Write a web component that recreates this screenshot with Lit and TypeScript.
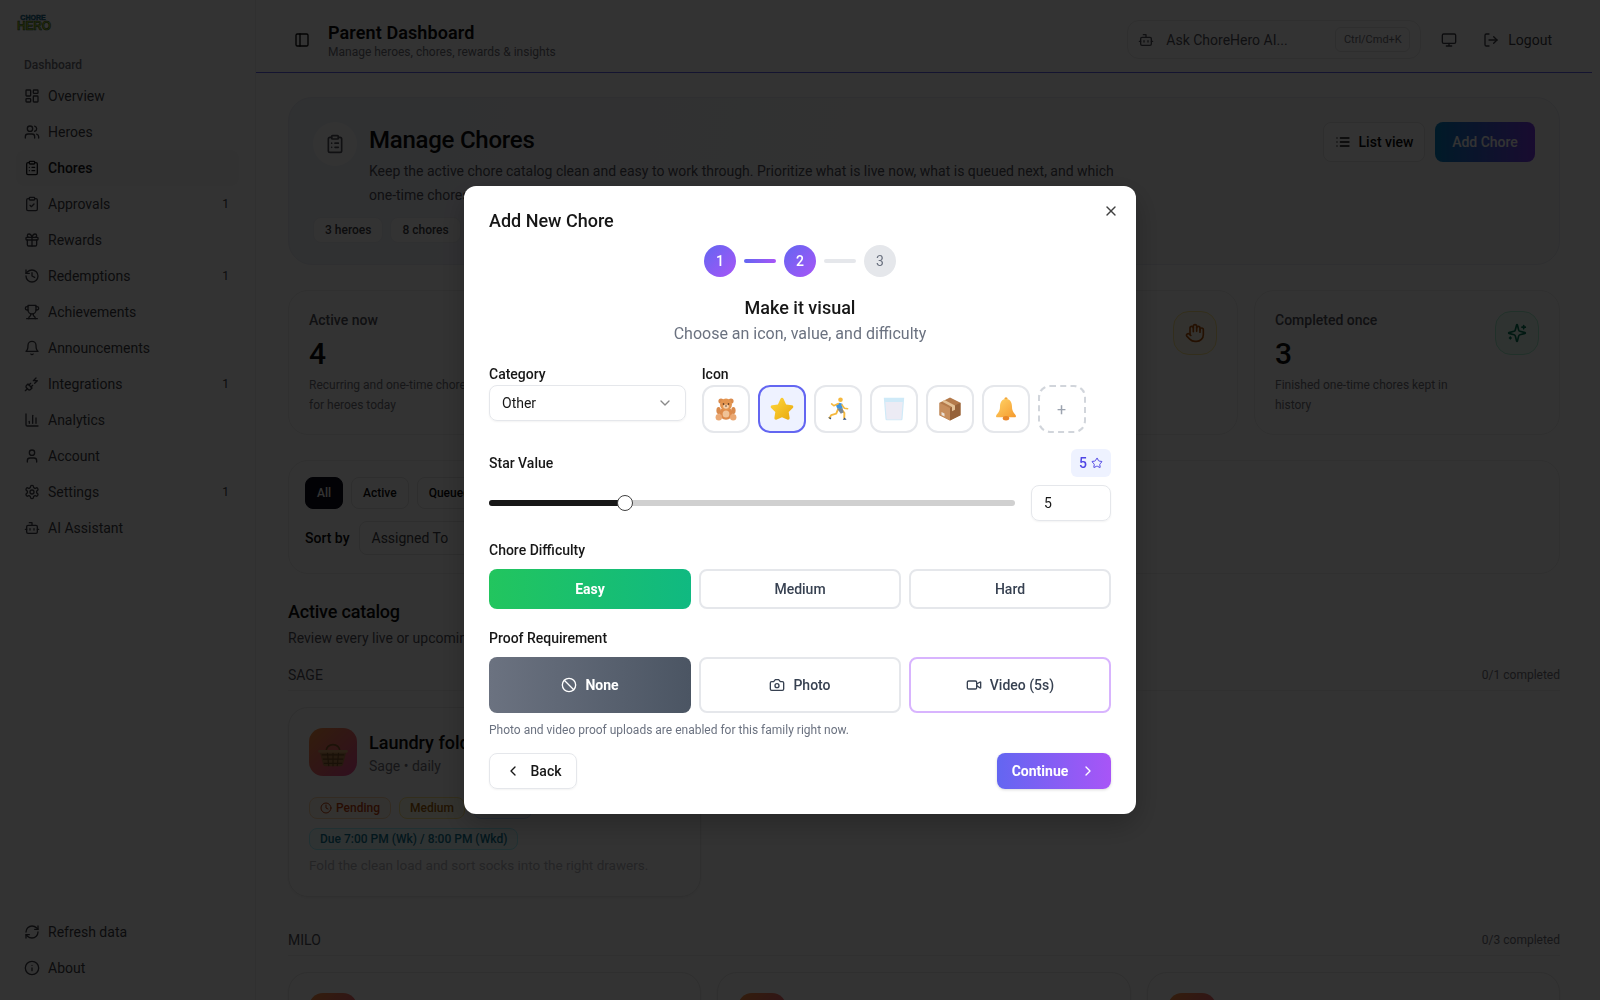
import { LitElement, html, css, svg } from "lit";
import { customElement } from "lit/decorators.js";
import { unsafeSVG } from "lit/directives/unsafe-svg.js";

const clip = `<rect x="8" y="2" width="8" height="4" rx="1"/><path d="M16 4h2a2 2 0 0 1 2 2v14a2 2 0 0 1-2 2H6a2 2 0 0 1-2-2V6a2 2 0 0 1 2-2h2"/>`;
const I: Record<string, string> = {
  dash: `<rect x="3" y="3" width="7" height="9" rx="1"/><rect x="14" y="3" width="7" height="5" rx="1"/><rect x="14" y="12" width="7" height="9" rx="1"/><rect x="3" y="16" width="7" height="5" rx="1"/>`,
  users: `<path d="M16 21v-2a4 4 0 0 0-4-4H6a4 4 0 0 0-4 4v2"/><circle cx="9" cy="7" r="4"/><path d="M22 21v-2a4 4 0 0 0-3-3.87"/><path d="M16 3.13a4 4 0 0 1 0 7.75"/>`,
  clipList: clip + `<path d="M12 11h4M12 16h4M8 11h.01M8 16h.01"/>`,
  clipCheck: clip + `<path d="m9 14 2 2 4-4"/>`,
  gift: `<rect x="3" y="8" width="18" height="4" rx="1"/><path d="M12 8v13"/><path d="M19 12v7a2 2 0 0 1-2 2H7a2 2 0 0 1-2-2v-7"/><path d="M7.5 8a2.5 2.5 0 0 1 0-5A4.8 8 0 0 1 12 8a4.8 8 0 0 1 4.5-5 2.5 2.5 0 0 1 0 5"/>`,
  history: `<path d="M3 12a9 9 0 1 0 9-9 9.75 9.75 0 0 0-6.74 2.74L3 8"/><path d="M3 3v5h5"/><path d="M12 7v5l4 2"/>`,
  trophy: `<path d="M6 9H4.5a2.5 2.5 0 0 1 0-5H6"/><path d="M18 9h1.5a2.5 2.5 0 0 0 0-5H18"/><path d="M4 22h16"/><path d="M10 14.66V17c0 .55-.47.98-.97 1.21C7.85 18.75 7 20.24 7 22"/><path d="M14 14.66V17c0 .55.47.98.97 1.21C16.15 18.75 17 20.24 17 22"/><path d="M18 2H6v7a6 6 0 0 0 12 0V2Z"/>`,
  bell: `<path d="M6 8a6 6 0 0 1 12 0c0 7 3 9 3 9H3s3-2 3-9"/><path d="M10.3 21a1.94 1.94 0 0 0 3.4 0"/>`,
  plug: `<path d="M6.3 20.3a2.4 2.4 0 0 0 3.4 0L12 18l-6-6-2.3 2.3a2.4 2.4 0 0 0 0 3.4Z"/><path d="m2 22 3-3"/><path d="M7.5 13.5 10 11"/><path d="M10.5 16.5 13 14"/><path d="m18 3-4 4h6l-4 4"/>`,
  chart: `<path d="M3 3v16a2 2 0 0 0 2 2h16"/><path d="M18 17V9"/><path d="M13 17V5"/><path d="M8 17v-3"/>`,
  user: `<path d="M19 21v-2a4 4 0 0 0-4-4H9a4 4 0 0 0-4 4v2"/><circle cx="12" cy="7" r="4"/>`,
  gear: `<path d="M12.22 2h-.44a2 2 0 0 0-2 2v.18a2 2 0 0 1-1 1.73l-.43.25a2 2 0 0 1-2 0l-.15-.08a2 2 0 0 0-2.73.73l-.22.38a2 2 0 0 0 .73 2.73l.15.1a2 2 0 0 1 1 1.72v.51a2 2 0 0 1-1 1.74l-.15.09a2 2 0 0 0-.73 2.73l.22.38a2 2 0 0 0 2.73.73l.15-.08a2 2 0 0 1 2 0l.43.25a2 2 0 0 1 1 1.73V20a2 2 0 0 0 2 2h.44a2 2 0 0 0 2-2v-.18a2 2 0 0 1 1-1.73l.43-.25a2 2 0 0 1 2 0l.15.08a2 2 0 0 0 2.73-.73l.22-.39a2 2 0 0 0-.73-2.73l-.15-.08a2 2 0 0 1-1-1.74v-.5a2 2 0 0 1 1-1.74l.15-.09a2 2 0 0 0 .73-2.73l-.22-.38a2 2 0 0 0-2.73-.73l-.15.08a2 2 0 0 1-2 0l-.43-.25a2 2 0 0 1-1-1.73V4a2 2 0 0 0-2-2z"/><circle cx="12" cy="12" r="3"/>`,
  bot: `<path d="M12 8V4H8"/><rect x="4" y="8" width="16" height="12" rx="2"/><path d="M2 14h2M20 14h2M15 13v2M9 13v2"/>`,
  refresh: `<path d="M3 12a9 9 0 0 1 9-9 9.75 9.75 0 0 1 6.74 2.74L21 8"/><path d="M21 3v5h-5"/><path d="M21 12a9 9 0 0 1-9 9 9.75 9.75 0 0 1-6.74-2.74L3 16"/><path d="M8 16H3v5"/>`,
  info: `<circle cx="12" cy="12" r="10"/><path d="M12 16v-4"/><path d="M12 8h.01"/>`,
  panel: `<rect x="3" y="3" width="18" height="18" rx="2"/><path d="M9 3v18"/>`,
  monitor: `<rect x="2" y="3" width="20" height="14" rx="2"/><path d="M8 21h8M12 17v4"/>`,
  logout: `<path d="M9 21H5a2 2 0 0 1-2-2V5a2 2 0 0 1 2-2h4"/><path d="m16 17 5-5-5-5"/><path d="M21 12H9"/>`,
  list: `<path d="M3 12h.01M3 18h.01M3 6h.01M8 12h13M8 18h13M8 6h13"/>`,
  hand: `<path d="M18 11V6a2 2 0 0 0-2-2a2 2 0 0 0-2 2"/><path d="M14 10V4a2 2 0 0 0-2-2a2 2 0 0 0-2 2v2"/><path d="M10 10.5V6a2 2 0 0 0-2-2a2 2 0 0 0-2 2v8"/><path d="M18 8a2 2 0 1 1 4 0v6a8 8 0 0 1-8 8h-2c-2.8 0-4.5-.86-5.99-2.34l-3.6-3.6a2 2 0 0 1 2.83-2.82L7 15"/>`,
  sparkles: `<path d="M9.937 15.5A2 2 0 0 0 8.5 14.063l-6.135-1.582a.5.5 0 0 1 0-.962L8.5 9.936A2 2 0 0 0 9.937 8.5l1.582-6.135a.5.5 0 0 1 .963 0L14.063 8.5A2 2 0 0 0 15.5 9.937l6.135 1.581a.5.5 0 0 1 0 .964L15.5 14.063a2 2 0 0 0-1.437 1.437l-1.582 6.135a.5.5 0 0 1-.963 0z"/><path d="M20 3v4M22 5h-4M4 17v2M5 18H3"/>`,
  x: `<path d="M18 6 6 18"/><path d="m6 6 12 12"/>`,
  down: `<path d="m6 9 6 6 6-6"/>`,
  left: `<path d="m15 18-6-6 6-6"/>`,
  right: `<path d="m9 18 6-6-6-6"/>`,
  star: `<path d="M11.525 2.295a.53.53 0 0 1 .95 0l2.31 4.679a2.123 2.123 0 0 0 1.595 1.16l5.166.756a.53.53 0 0 1 .294.904l-3.736 3.638a2.123 2.123 0 0 0-.611 1.878l.882 5.14a.53.53 0 0 1-.771.56l-4.618-2.428a2.122 2.122 0 0 0-1.973 0L6.396 21.01a.53.53 0 0 1-.77-.56l.881-5.139a2.122 2.122 0 0 0-.611-1.879L2.16 9.795a.53.53 0 0 1 .294-.906l5.165-.755a2.122 2.122 0 0 0 1.597-1.16z"/>`,
  ban: `<circle cx="12" cy="12" r="10"/><path d="m4.9 4.9 14.2 14.2"/>`,
  camera: `<path d="M14.5 4h-5L7 7H4a2 2 0 0 0-2 2v9a2 2 0 0 0 2 2h16a2 2 0 0 0 2-2V9a2 2 0 0 0-2-2h-3l-2.5-3z"/><circle cx="12" cy="13" r="3"/>`,
  video: `<path d="m16 13 5.223 3.482a.5.5 0 0 0 .777-.416V7.87a.5.5 0 0 0-.752-.432L16 10.5"/><rect x="2" y="6" width="14" height="12" rx="2"/>`,
  clock: `<circle cx="12" cy="12" r="10"/><path d="M12 6v6l4 2"/>`,
};

const icon = (name: string, cls = "i16") =>
  html`<svg class=${cls} viewBox="0 0 24 24" fill="none" stroke="currentColor" stroke-width="2" stroke-linecap="round" stroke-linejoin="round">${unsafeSVG(I[name])}</svg>`;

const teddy = svg`
  <circle cx="7" cy="4" r="2.6" fill="#d98a4c"/><circle cx="17" cy="4" r="2.6" fill="#d98a4c"/>
  <ellipse cx="12" cy="16.5" rx="6.6" ry="6.200" fill="#dd8a4a"/>
  <circle cx="4.800" cy="20.200" r="3.200" fill="#eaa873"/><circle cx="19.200" cy="20.200" r="3.200" fill="#eaa873"/>
  <ellipse cx="4.600" cy="13.500" rx="2.200" ry="3.600" fill="#d98a4c"/><ellipse cx="19.400" cy="13.500" rx="2.200" ry="3.600" fill="#d98a4c"/>
  <circle cx="12" cy="7.600" r="6" fill="#e3944f"/><ellipse cx="12" cy="9.600" rx="2.800" ry="2.100" fill="#f5d0ab"/>
  <circle cx="9.500" cy="7" r=".8" fill="#3b2314"/><circle cx="14.500" cy="7" r=".8" fill="#3b2314"/><circle cx="12" cy="9" r=".7" fill="#3b2314"/>
  <ellipse cx="12" cy="17" rx="3.400" ry="3.600" fill="#f0c297"/>`;
const star = svg`
  <defs><linearGradient id="st" x1="0" y1="0" x2="1" y2="1"><stop offset="0" stop-color="#ffd83d"/><stop offset="1" stop-color="#e8a70c"/></linearGradient></defs>
  <path d="M12 .8c.7 0 1.200.4 1.600 1.200l2.500 5.400 5.700.8c1.500.2 2 1.700 1 2.700l-4.100 4.100.9 5.800c.2 1.500-1 2.500-2.400 1.800L12 20.200l-5.200 2.400c-1.400.7-2.600-.3-2.400-1.800l.9-5.800-4.100-4.100c-1-1-.5-2.500 1-2.700l5.700-.8L10.400 2c.4-.8.900-1.200 1.600-1.200z" fill="url(#st)"/>`;
const runner = svg`
  <circle cx="14.500" cy="2.800" r="2.300" fill="#f5b83d"/>
  <path d="M10 8.500l3.400-2.800 3 1 .2 5.600-4.800.6z" fill="#3f94e0"/>
  <path d="M12.400 6.500 7.800 8.700 5.600 6.900M16 7.900l2.400 3.400 3.200.4" fill="none" stroke="#f5b83d" stroke-width="1.600" stroke-linecap="round" stroke-linejoin="round"/>
  <path d="M12 12.300l-1.800 4.400-5 1.400-1.600 2.800" fill="none" stroke="#f5b83d" stroke-width="1.900" stroke-linecap="round" stroke-linejoin="round"/>
  <path d="M15.800 12.500l2.600 3.600-.2 5" fill="none" stroke="#f5b83d" stroke-width="1.900" stroke-linecap="round" stroke-linejoin="round"/>
  <path d="M11.400 12.100l5-.6 1.400 3.800-3 1.400z" fill="#7b8794"/>
  <path d="M2 20.200l2.600 2.400.8-1.800zM16.800 22.800h3.800l-2-2.200z" fill="#34507a"/>`;
const glass = svg`
  <path d="M1.800 .8h20.400l-1.700 21.400a1.200 1.200 0 0 1-1.200 1H4.700a1.200 1.200 0 0 1-1.200-1z" fill="#cfeaf8"/>
  <path d="M3.300 5h17.400l-1.300 16.800a.7.700 0 0 1-.7.600H5.300a.7.700 0 0 1-.7-.6z" fill="#ecebf4"/>`;
const box = svg`
  <path d="M12 .6 22.500 5.800v12.400L12 23.400 1.500 18.200V5.800z" fill="#b47a4b"/>
  <path d="M1.500 5.800 12 11v12.400L1.500 18.200z" fill="#c68d5c"/>
  <path d="M22.500 5.800 12 11v12.400l10.500-5.200z" fill="#96623a"/>
  <path d="M6.500 3.100 17 8.400v4.400l-3 1.400V10L3.900 4.500z" fill="#e2bf94"/>
  <path d="M3.500 15l3 1.400v3l-3-1.400z" fill="#e9e0d6"/>`;
const bellE = svg`
  <defs><linearGradient id="be" x1="0" y1="0" x2="1" y2="1"><stop offset="0" stop-color="#ffd366"/><stop offset="1" stop-color="#f59a2e"/></linearGradient></defs>
  <circle cx="12" cy="1.800" r="1.600" fill="#f2a73a"/>
  <path d="M12 2c4.200 0 6 3.400 6 7.800 0 4.800 2.400 6.400 3.800 8.600.5.900 0 1.800-1.100 1.800H3.300c-1.100 0-1.600-.9-1.100-1.800C3.600 16.200 6 14.600 6 9.800 6 5.400 7.800 2 12 2z" fill="url(#be)"/>
  <ellipse cx="12" cy="21.200" rx="3.200" ry="2.200" fill="#e8862a"/>`;
const basket = svg`
  <path d="M7 12C7 5 17 5 17 12" fill="none" stroke="#8a5a2b" stroke-width="1.200"/>
  <path d="M2.500 11.500h19l-2.500 9.500a1.500 1.500 0 0 1-1.400 1H6.400a1.500 1.500 0 0 1-1.400-1z" fill="#b8804a"/>
  <path d="M4 14h16M4.800 17h14.400M5.500 20h13M8 12l1 10M12 12v10M16 12l-1 10" stroke="#7a4f26" stroke-width=".8"/>
  <rect x="1.500" y="10.500" width="21" height="2" rx="1" fill="#d9a56e"/>`;

const nav = [
  ["dash", "Overview"], ["users", "Heroes"], ["clipList", "Chores"], ["clipCheck", "Approvals", "1"],
  ["gift", "Rewards"], ["history", "Redemptions", "1"], ["trophy", "Achievements"], ["bell", "Announcements"],
  ["plug", "Integrations", "1"], ["chart", "Analytics"], ["user", "Account"], ["gear", "Settings", "1"], ["bot", "AI Assistant"],
];

@customElement("app-root")
export class AppRoot extends LitElement {
  static styles = css`
    :host { display: block; height: 100vh; overflow: hidden; font-family: Roboto, "Noto Sans", sans-serif; color: #0a0a0a; background: #fff; }
    * { box-sizing: border-box; }
    .i16 { width: 16px; height: 16px; flex: none; }
    .i14 { width: 14px; height: 14px; flex: none; }
    .i12 { width: 12px; height: 12px; flex: none; }
    .i20 { width: 20px; height: 20px; flex: none; }
    .page { display: flex; height: 1000px; }
    .side { width: 256px; flex: none; display: flex; flex-direction: column; padding: 0 16px; background: #fff; border-right: 1px solid #eee; }
    .logo { height: 52px; padding: 14px 0 0 1px; font-family: "Liberation Sans", sans-serif; font-weight: 700; line-height: 1; text-align: center; width: 33px; }
    .logo .a { font-size: 7px; color: #1a9bb0; -webkit-text-stroke: .4px #133a63; }
    .logo .b { font-size: 12px; margin-top: -1px; color: #b3d626; -webkit-text-stroke: .5px #134a3a; letter-spacing: -.2px; }
    .group { font-size: 12px; color: #71717a; font-weight: 500; padding: 4px 8px 0; height: 26px; line-height: 18px; }
    .item { height: 36px; display: flex; align-items: center; gap: 8px; padding: 0 8px; width: 223px; font-size: 14px; color: #3f3f46; border-radius: 8px; }
    .item.on { background: #fafafa; color: #18181b; font-weight: 500; }
    .item .n { margin-left: auto; font-size: 12px; padding-right: 2px; color: #3f3f46; }
    .spacer { flex: 1; }
    .side-bottom { padding-bottom: 14px; }
    .main { flex: 1; min-width: 0; display: flex; flex-direction: column; }
    .head { height: 73px; flex: none; display: flex; align-items: center; border-bottom: 1px solid #6366f1; padding: 7px 40px 0 38px; }
    .head .tt { margin: 4px 0 0 18px; }
    .head h1 { font-size: 18px; line-height: 22px; margin: 0; font-weight: 600; letter-spacing: .1px; }
    .head p { margin: 0; font-size: 12px; line-height: 17px; color: #71717a; }
    .search { margin-left: auto; width: 294px; height: 39px; border: 1px solid #eaeaea; border-radius: 12px; display: flex; align-items: center; padding: 0 10px; gap: 12px; font-size: 14px; color: #52525b; }
    .kbd { margin-left: auto; height: 25px; width: 75px; border: 1px solid #e5e5e5; border-radius: 6px; font-size: 11px; display: flex; align-items: center; justify-content: center; color: #71717a; }
    .hbtn { margin-left: 20px; display: flex; align-items: center; gap: 9px; font-size: 14px; color: #3f3f46; }
    .hbtn.lo { margin-left: 26px; }
    .content { padding: 24px 32px 0; display: flex; flex-direction: column; }
    .hero { height: 168px; border: 1px solid #e8ebf3; border-radius: 24px; background: linear-gradient(100deg, #eef2fb, #f6f7fb 35%, #fafafa 70%); padding: 24px 24px 0; }
    .hero-top { display: flex; }
    .hero-ic { width: 44px; height: 44px; border-radius: 50%; background: #fff; display: flex; align-items: center; justify-content: center; flex: none; color: #52525b; }
    .hero-tx { margin-left: 12px; width: 745px; }
    .hero-tx h2 { margin: 2px 0 0; font-size: 24px; line-height: 32px; font-weight: 500; letter-spacing: -.25px; }
    .hero-tx p { margin: 3px 0 0; font-size: 14px; line-height: 24px; color: #52525b; }
    .hero-btns { margin-left: auto; display: flex; gap: 10px; align-items: flex-start; }
    .btn { height: 40px; display: flex; align-items: center; justify-content: center; gap: 8px; border-radius: 8px; font-size: 14px; font-weight: 500; }
    .btn.out { width: 102px; border: 1px solid #e5e5e5; background: #fff; }
    .btn.grad { width: 100px; color: #fff; background: linear-gradient(90deg, #0284c7, #7c3aed); }
    .chips { display: flex; gap: 7px; margin-top: 10px; }
    .chip { height: 26px; padding: 0 11px; border: 1px solid #eceef3; background: #fff; border-radius: 8px; font-size: 12px; font-weight: 500; line-height: 24px; color: #3f3f46; }
    .stats { display: grid; grid-template-columns: repeat(4, 1fr); gap: 16px; margin-top: 25px; }
    .stat { height: 145px; border: 1px solid #eee; border-radius: 20px; padding: 19px 20px; display: flex; justify-content: space-between; }
    .stat .l { font-size: 14px; line-height: 20px; font-weight: 500; color: #52525b; }
    .stat .v { font-size: 30px; line-height: 36px; margin-top: 6px; font-weight: 500; }
    .stat .d { font-size: 12px; line-height: 20px; color: #71717a; margin-top: 3px; width: 192px; }
    .sbox { width: 44px; height: 44px; border-radius: 16px; display: flex; align-items: center; justify-content: center; flex: none; border: 1px solid; margin-top: 1px; }
    .sbox.a { background: #fffbeb; border-color: #fde68a; color: #b45309; }
    .sbox.g { background: #ecfdf5; border-color: #a7f3d0; color: #047857; }
    .sbox.b { background: #eff6ff; border-color: #bfdbfe; color: #1d4ed8; }
    .filter { height: 114px; margin-top: 25px; border: 1px solid #eee; border-radius: 20px; padding: 16px; }
    .pills { display: flex; gap: 8px; }
    .pill { height: 32px; padding: 0 11px; border: 1px solid #e5e5e5; border-radius: 8px; font-size: 12px; font-weight: 500; line-height: 30px; }
    .pill.on { background: #0a0a1a; color: #fff; border-color: #0a0a1a; }
    .sort { display: flex; align-items: center; gap: 9px; margin-top: 12px; font-size: 14px; font-weight: 500; }
    .sel { width: 200px; height: 34px; border: 1px solid #e5e5e5; border-radius: 8px; padding: 0 12px; line-height: 32px; font-weight: 400; color: #3f3f46; }
    .cat-h { margin: 25px 0 0; font-size: 18px; line-height: 26px; font-weight: 500; letter-spacing: -.2px; }
    .cat-p { margin: 3px 0 0; font-size: 14px; line-height: 20px; color: #52525b; }
    .who { display: flex; justify-content: space-between; align-items: center; margin-top: 17px; height: 20px; font-size: 14px; color: #52525b; text-transform: uppercase; }
    .who.milo { margin-top: 33px; }
    .who span { font-size: 12px; color: #71717a; text-transform: none; }
    .sep { height: 1px; background: #f0f0f0; margin-top: 5px; }
    .cards { display: grid; grid-template-columns: repeat(3, 1fr); gap: 16px; margin-top: 16px; }
    .card { height: 190px; border: 1px solid #e8e8e8; border-radius: 20px; padding: 20px; box-shadow: 0 1px 3px rgba(0,0,0,.06); }
    .card-top { display: flex; gap: 12px; }
    .thumb { width: 48px; height: 48px; border-radius: 14px; background: linear-gradient(135deg, #fb923c, #ec4899); display: flex; align-items: center; justify-content: center; flex: none; }
    .thumb svg { width: 34px; height: 34px; }
    .card h3 { margin: 2px 0 0; font-size: 18px; line-height: 26px; font-weight: 500; white-space: nowrap; }
    .card .s { margin-top: 1px; font-size: 14px; line-height: 18px; color: #71717a; }
    .badges { display: flex; gap: 8px; margin-top: 21px; }
    .bd { height: 22px; padding: 0 10px; border: 1px solid; border-radius: 8px; font-size: 12px; font-weight: 500; display: flex; gap: 4px; align-items: center; white-space: nowrap; }
    .bd.o { background: #fff7ed; border-color: #fed7aa; color: #c2410c; }
    .bd.y { background: #fefce8; border-color: #fde68a; color: #a16207; }
    .bd.b { background: #eff6ff; border-color: #bfdbfe; color: #1d4ed8; }
    .bd.c { background: #ecfeff; border-color: #a5f3fc; color: #0e7490; }
    .row2 { margin-top: 9px; width: fit-content; }
    .cd { margin: 6px 0 0; font-size: 13.500px; line-height: 18px; color: #b4b4bb; white-space: nowrap; }
    .gutter { width: 8px; flex: none; }

    .overlay { position: fixed; inset: 0; background: rgba(0,0,0,.8); display: flex; align-items: center; justify-content: center; }
    .modal { width: 672px; height: 628px; background: #fff; border-radius: 12px; padding: 24px 25px; position: relative; box-shadow: 0 10px 30px rgba(0,0,0,.25); color: #171717; }
    .modal h2 { margin: 0; font-size: 18px; line-height: 22px; font-weight: 500; }
    .close { position: absolute; right: 17px; top: 17px; color: #404040; display: flex; }
    .steps { display: flex; justify-content: center; align-items: center; gap: 8px; margin-top: 13px; }
    .st { width: 32px; height: 32px; border-radius: 50%; display: flex; align-items: center; justify-content: center; font-size: 14px; font-weight: 500; background: linear-gradient(135deg, #6366f1, #a855f7); color: #fff; }
    .st.off { background: #e5e7eb; color: #6b7280; font-weight: 400; }
    .ln { width: 32px; height: 4px; border-radius: 2px; background: linear-gradient(90deg, #6366f1, #a855f7); }
    .ln.off { background: #e5e7eb; }
    .mh { margin: 17px 0 0; text-align: center; font-size: 18px; line-height: 28px; font-weight: 500; }
    .ms { margin: 0; text-align: center; font-size: 16px; line-height: 24px; color: #6b7280; }
    .lab { font-size: 14px; line-height: 20px; font-weight: 500; display: block; }
    .top3 { display: grid; grid-template-columns: repeat(3, 1fr); column-gap: 16px; margin-top: 18px; }
    .span2 { grid-column: span 2; }
    .select { margin-top: 1px; height: 36px; border: 1px solid #e5e7eb; border-radius: 8px; display: flex; align-items: center; justify-content: space-between; padding: 0 12px; font-size: 14px; box-shadow: 0 1px 2px rgba(0,0,0,.05); }
    .select svg { color: #8a8a8a; }
    .icons { display: flex; gap: 8px; margin-top: 1px; }
    .ib { width: 48px; height: 48px; border: 2px solid #e5e7eb; border-radius: 12px; display: flex; align-items: center; justify-content: center; background: #fff; }
    .ib svg { width: 24px; height: 24px; }
    .ib.on { border-color: #6366f1; background: #eef2ff; }
    .ib.add { border-style: dashed; border-color: #d1d5db; color: #9ca3af; font-size: 16px; }
    .starRow { display: flex; justify-content: space-between; align-items: center; margin-top: 16px; height: 28px; }
    .sb { width: 40px; height: 28px; border-radius: 6px; background: #eef2ff; color: #4f46e5; font-size: 14px; font-weight: 500; display: flex; align-items: center; justify-content: center; gap: 4px; }
    .sliderRow { display: flex; align-items: center; gap: 16px; margin-top: 8px; }
    .track { flex: 1; height: 6px; border-radius: 3px; background: #d0d0d0; position: relative; }
    .fill { height: 100%; background: #171717; border-radius: 3px; }
    .thumbk { position: absolute; top: -5px; margin-left: -8px; width: 16px; height: 16px; border-radius: 50%; background: #fff; border: 1px solid #404040; }
    .num { width: 80px; height: 36px; border: 1px solid #e5e7eb; border-radius: 8px; padding-left: 12px; font-size: 14px; line-height: 34px; box-shadow: 0 1px 2px rgba(0,0,0,.05); }
    .mt19 { margin-top: 19px; }
    .seg { display: grid; grid-template-columns: repeat(3, 1fr); gap: 8px; margin-top: 9px; }
    .sg { height: 40px; border: 2px solid #e5e7eb; border-radius: 8px; display: flex; align-items: center; justify-content: center; gap: 8px; font-size: 14px; font-weight: 500; color: #374151; background: #fff; }
    .sg.tall { height: 56px; }
    .sg.easy { border: 0; background: linear-gradient(90deg, #22c55e, #10b981); color: #fff; font-weight: 700; }
    .sg.none { border: 0; background: linear-gradient(90deg, #6b7280, #4b5563); color: #fff; font-weight: 700; }
    .sg.vid { border-color: #d8b4fe; }
    .hint { margin: 9px 0 0; font-size: 12px; line-height: 16px; color: #6b7280; }
    .foot { display: flex; justify-content: space-between; margin-top: 15px; }
    .back, .cont { height: 36px; border-radius: 8px; display: flex; align-items: center; justify-content: center; font-size: 14px; font-weight: 500; gap: 10px; }
    .back { width: 88px; border: 1px solid #e5e7eb; box-shadow: 0 1px 2px rgba(0,0,0,.05); }
    .cont { width: 114px; gap: 12px; background: linear-gradient(90deg, #6366f1, #a855f7); color: #fff; font-weight: 700; box-shadow: 0 1px 3px rgba(0,0,0,.15); }
  `;

  navItem(n: string[], active = false) {
    return html`<div class="item ${active ? "on" : ""}">${icon(n[0])}<span>${n[1]}</span>${n[2] ? html`<span class="n">${n[2]}</span>` : ""}</div>`;
  }

  stat(label: string, v: string, d: string, ic: string, cls: string) {
    return html`<div class="stat"><div><div class="l">${label}</div><div class="v">${v}</div><div class="d">${d}</div></div><div class="sbox ${cls}">${icon(ic, "i20")}</div></div>`;
  }

  render() {
    const star5 = 25.9;
    return html`
      <div class="page">
        <aside class="side">
          <div class="logo"><div class="a">CHORE</div><div class="b">HERO</div></div>
          <div class="group">Dashboard</div>
          ${nav.map((n) => this.navItem(n, n[1] === "Chores"))}
          <div class="spacer"></div>
          <div class="side-bottom">${this.navItem(["refresh", "Refresh data"])}${this.navItem(["info", "About"])}</div>
        </aside>
        <main class="main">
          <header class="head">
            ${icon("panel")}
            <div class="tt"><h1>Parent Dashboard</h1><p>Manage heroes, chores, rewards &amp; insights</p></div>
            <div class="search">${icon("bot", "i16")}<span>Ask ChoreHero AI...</span><span class="kbd">Ctrl/Cmd+K</span></div>
            <div class="hbtn">${icon("monitor")}</div>
            <div class="hbtn lo">${icon("logout")}<span>Logout</span></div>
          </header>
          <div class="content">
            <section class="hero">
              <div class="hero-top">
                <div class="hero-ic">${icon("clipList", "i20")}</div>
                <div class="hero-tx">
                  <h2>Manage Chores</h2>
                  <p>Keep the active chore catalog clean and easy to work through. Prioritize what is live now, what is queued next, and which one-time chores are already finished.</p>
                </div>
                <div class="hero-btns"><div class="btn out">${icon("list")}List view</div><div class="btn grad">Add Chore</div></div>
              </div>
              <div class="chips"><div class="chip">3 heroes</div><div class="chip">8 chores</div></div>
            </section>
            <section class="stats">
              ${this.stat("Active now", "4", "Recurring and one-time chores live for heroes today", "clock", "b")}
              ${this.stat("Queued", "1", "Scheduled chores starting later", "clock", "b")}
              ${this.stat("Needs approval", "1", "Waiting on a parent review", "hand", "a")}
              ${this.stat("Completed once", "3", "Finished one-time chores kept in history", "sparkles", "g")}
            </section>
            <section class="filter">
              <div class="pills"><div class="pill on">All</div><div class="pill">Active</div><div class="pill">Queued</div></div>
              <div class="sort">Sort by <div class="sel">Assigned To</div></div>
            </section>
            <h2 class="cat-h">Active catalog</h2>
            <p class="cat-p">Review every live or upcoming chore for your heroes.</p>
            <div class="who">Sage<span>0/1 completed</span></div>
            <div class="sep"></div>
            <div class="cards">
              <div class="card">
                <div class="card-top"><div class="thumb"><svg viewBox="0 0 24 24">${basket}</svg></div><div><h3>Laundry fold</h3><div class="s">Sage • daily</div></div></div>
                <div class="badges"><div class="bd o">${icon("clock", "i12")}Pending</div><div class="bd y">Medium</div><div class="bd b">5 stars</div></div>
                <div class="bd c row2">Due 7:00 PM (Wk) / 8:00 PM (Wkd)</div>
                <p class="cd">Fold the clean load and sort socks into the right drawers.</p>
              </div>
            </div>
            <div class="who milo">Milo<span>0/3 completed</span></div>
            <div class="sep"></div>
            <div class="cards">
              <div class="card"><div class="card-top"><div class="thumb"></div><div><h3>Pack backpack with labels</h3></div></div></div>
              <div class="card"><div class="card-top"><div class="thumb"></div><div><h3>Feed the hamster</h3></div></div></div>
              <div class="card"><div class="card-top"><div class="thumb"></div><div><h3>Read for twenty min</h3></div></div></div>
            </div>
          </div>
        </main>
        <div class="gutter"></div>
      </div>
      <div class="overlay">
        <div class="modal">
          <h2>Add New Chore</h2>
          <div class="close">${icon("x")}</div>
          <div class="steps"><div class="st">1</div><div class="ln"></div><div class="st">2</div><div class="ln off"></div><div class="st off">3</div></div>
          <div class="mh">Make it visual</div>
          <div class="ms">Choose an icon, value, and difficulty</div>
          <div class="top3">
            <div><span class="lab">Category</span><div class="select">Other${icon("down")}</div></div>
            <div class="span2"><span class="lab">Icon</span>
              <div class="icons">
                <div class="ib"><svg viewBox="0 0 24 24">${teddy}</svg></div>
                <div class="ib on"><svg viewBox="0 0 24 24">${star}</svg></div>
                <div class="ib"><svg viewBox="0 0 24 24">${runner}</svg></div>
                <div class="ib"><svg viewBox="0 0 24 24">${glass}</svg></div>
                <div class="ib"><svg viewBox="0 0 24 24">${box}</svg></div>
                <div class="ib"><svg viewBox="0 0 24 24">${bellE}</svg></div>
                <div class="ib add">+</div>
              </div>
            </div>
          </div>
          <div class="starRow"><span class="lab">Star Value</span><div class="sb">5 ${icon("star", "i12")}</div></div>
          <div class="sliderRow">
            <div class="track"><div class="fill" style="width:${star5}%"></div><div class="thumbk" style="left:${star5}%"></div></div>
            <div class="num">5</div>
          </div>
          <span class="lab mt19">Chore Difficulty</span>
          <div class="seg"><div class="sg easy">Easy</div><div class="sg">Medium</div><div class="sg">Hard</div></div>
          <span class="lab mt19">Proof Requirement</span>
          <div class="seg">
            <div class="sg tall none">${icon("ban")}None</div>
            <div class="sg tall">${icon("camera")}Photo</div>
            <div class="sg tall vid">${icon("video")}Video (5s)</div>
          </div>
          <p class="hint">Photo and video proof uploads are enabled for this family right now.</p>
          <div class="foot">
            <div class="back">${icon("left")}Back</div>
            <div class="cont">Continue${icon("right")}</div>
          </div>
        </div>
      </div>
    `;
  }
}
